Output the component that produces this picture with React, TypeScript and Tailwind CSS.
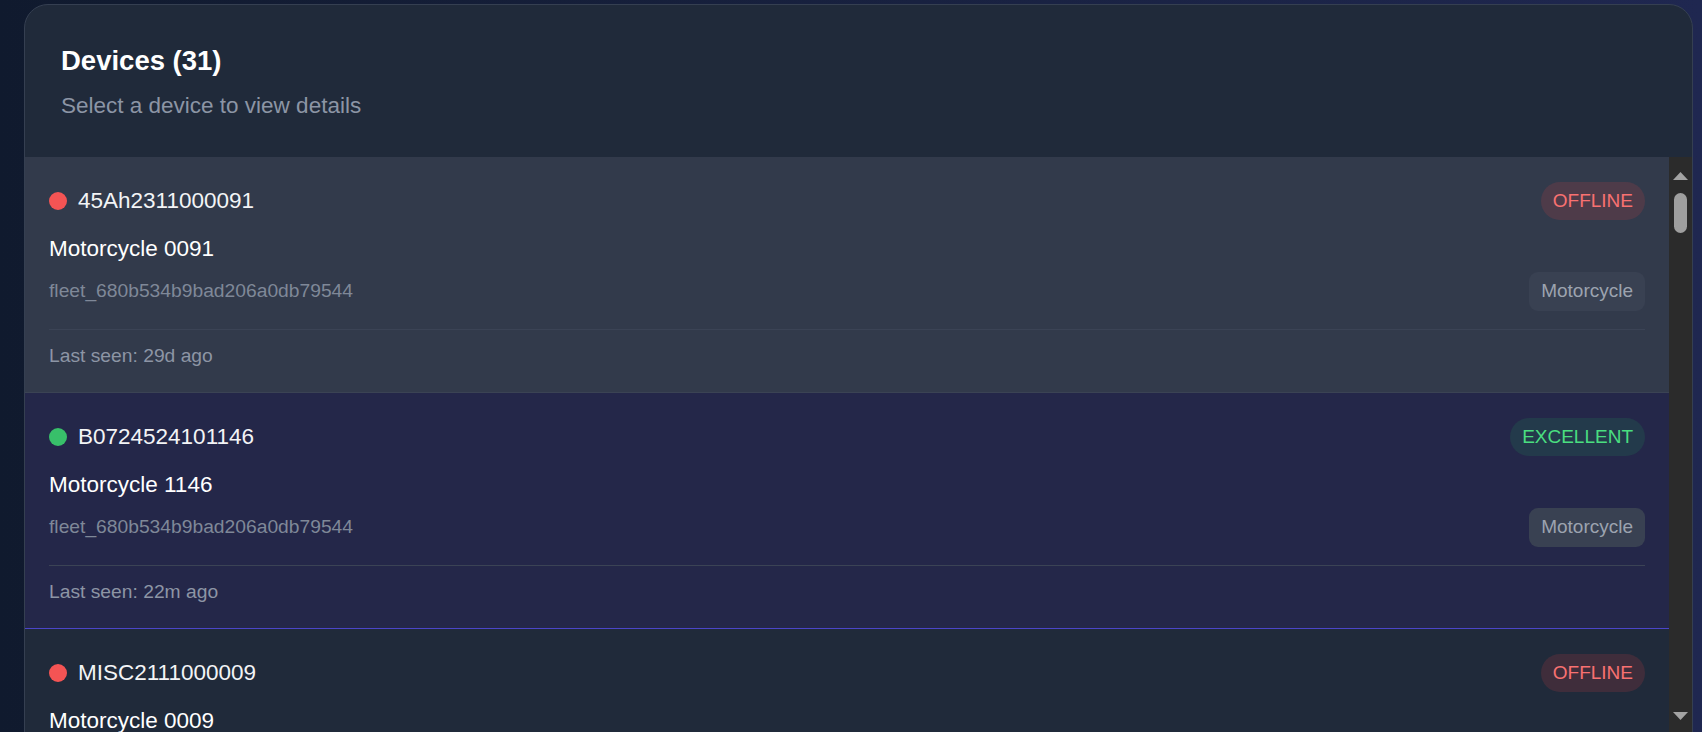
import type { ReactNode } from 'react'

type Device = {
  id: string
  name: string
  fleet: string
  type: string
  status: 'OFFLINE' | 'EXCELLENT'
  lastSeen: string
  variant: 'hover' | 'selected' | 'plain'
}

const devices: Device[] = [
  {
    id: '45Ah2311000091',
    name: 'Motorcycle 0091',
    fleet: 'fleet_680b534b9bad206a0db79544',
    type: 'Motorcycle',
    status: 'OFFLINE',
    lastSeen: '29d ago',
    variant: 'hover',
  },
  {
    id: 'B0724524101146',
    name: 'Motorcycle 1146',
    fleet: 'fleet_680b534b9bad206a0db79544',
    type: 'Motorcycle',
    status: 'EXCELLENT',
    lastSeen: '22m ago',
    variant: 'selected',
  },
  {
    id: 'MISC2111000009',
    name: 'Motorcycle 0009',
    fleet: 'fleet_680b534b9bad206a0db79544',
    type: 'Motorcycle',
    status: 'OFFLINE',
    lastSeen: '29d ago',
    variant: 'plain',
  },
]

function StatusBadge({ status }: { status: Device['status'] }) {
  const tone =
    status === 'OFFLINE'
      ? 'bg-[#ef4444]/15 text-[#f87171]'
      : 'bg-[#22c55e]/12 text-[#4ade80]'
  return (
    <span
      className={`flex h-[38px] items-center rounded-full px-[12px] text-[19px] ${tone}`}
    >
      {status}
    </span>
  )
}

function DeviceRow({ device }: { device: Device }) {
  const bg =
    device.variant === 'hover'
      ? 'bg-[#323a4b] border-[#3b4354]'
      : device.variant === 'selected'
        ? 'bg-[#242749] border-[#4b45c9]'
        : 'bg-[#202a3a] border-[#323b4c]'
  const dot = device.status === 'OFFLINE' ? 'bg-[#f45454]' : 'bg-[#38c06a]'

  return (
    <div className={`border-b px-[24px] pt-[25px] pb-[22px] ${bg}`}>
      <div className="flex h-[38px] items-center justify-between">
        <div className="flex items-center gap-[11px]">
          <span className={`h-[18px] w-[18px] rounded-full ${dot}`} />
          <span className="text-[22.5px] leading-none text-[#f3f4f6]">{device.id}</span>
        </div>
        <StatusBadge status={device.status} />
      </div>
      <p className="mt-[12px] text-[22.5px] leading-[34px] text-white">{device.name}</p>
      <div className="mt-[6px] flex items-center justify-between">
        <span className="text-[19.25px] text-[#7f8898]">{device.fleet}</span>
        <span className="flex h-[39px] items-center rounded-[9px] bg-[#394152] px-[12px] text-[19px] text-[#9ca3af]">
          {device.type}
        </span>
      </div>
      <div className="mt-[18px] border-t border-[#3b4355] pt-[11px] text-[19.25px] leading-[29px] text-[#8d95a5]">
        Last seen: {device.lastSeen}
      </div>
    </div>
  )
}

function Scrollbar(): ReactNode {
  return (
    <div className="flex w-[23px] shrink-0 flex-col items-center bg-[#2b2b2b] pt-[15px] pb-[15px]">
      <svg width="15" height="8" viewBox="0 0 15 8">
        <path d="M7.5 0 L15 8 L0 8 Z" fill="#a3a3a3" />
      </svg>
      <div className="mt-[13px] h-[40px] w-[13px] rounded-full bg-[#9f9f9f]" />
      <div className="flex-1" />
      <svg width="15" height="8" viewBox="0 0 15 8">
        <path d="M0 0 L15 0 L7.5 8 Z" fill="#a3a3a3" />
      </svg>
    </div>
  )
}

export default function App() {
  return (
    <div
      className="h-[732px] overflow-hidden bg-linear-to-r from-[#101a2e] to-[#1f2750] pt-[4px] pl-[24px]"
      style={{ fontFamily: '"Liberation Sans", Arial, sans-serif' }}
    >
      <div className="flex h-[800px] w-[1669px] flex-col overflow-hidden rounded-[24px] border border-[#353f51] bg-[#202a3a]">
        <div className="px-[36px] pt-[38px] pb-[35px]">
          <h2 className="text-[27.5px] leading-[36px] font-bold text-white">Devices (31)</h2>
          <p className="mt-[10px] text-[22.5px] leading-[33px] text-[#8c95a5]">
            Select a device to view details
          </p>
        </div>
        <div className="flex h-[578px] shrink-0">
          <div className="flex-1 overflow-hidden">
            {devices.map((d) => (
              <DeviceRow key={d.id} device={d} />
            ))}
          </div>
          <Scrollbar />
        </div>
      </div>
    </div>
  )
}
